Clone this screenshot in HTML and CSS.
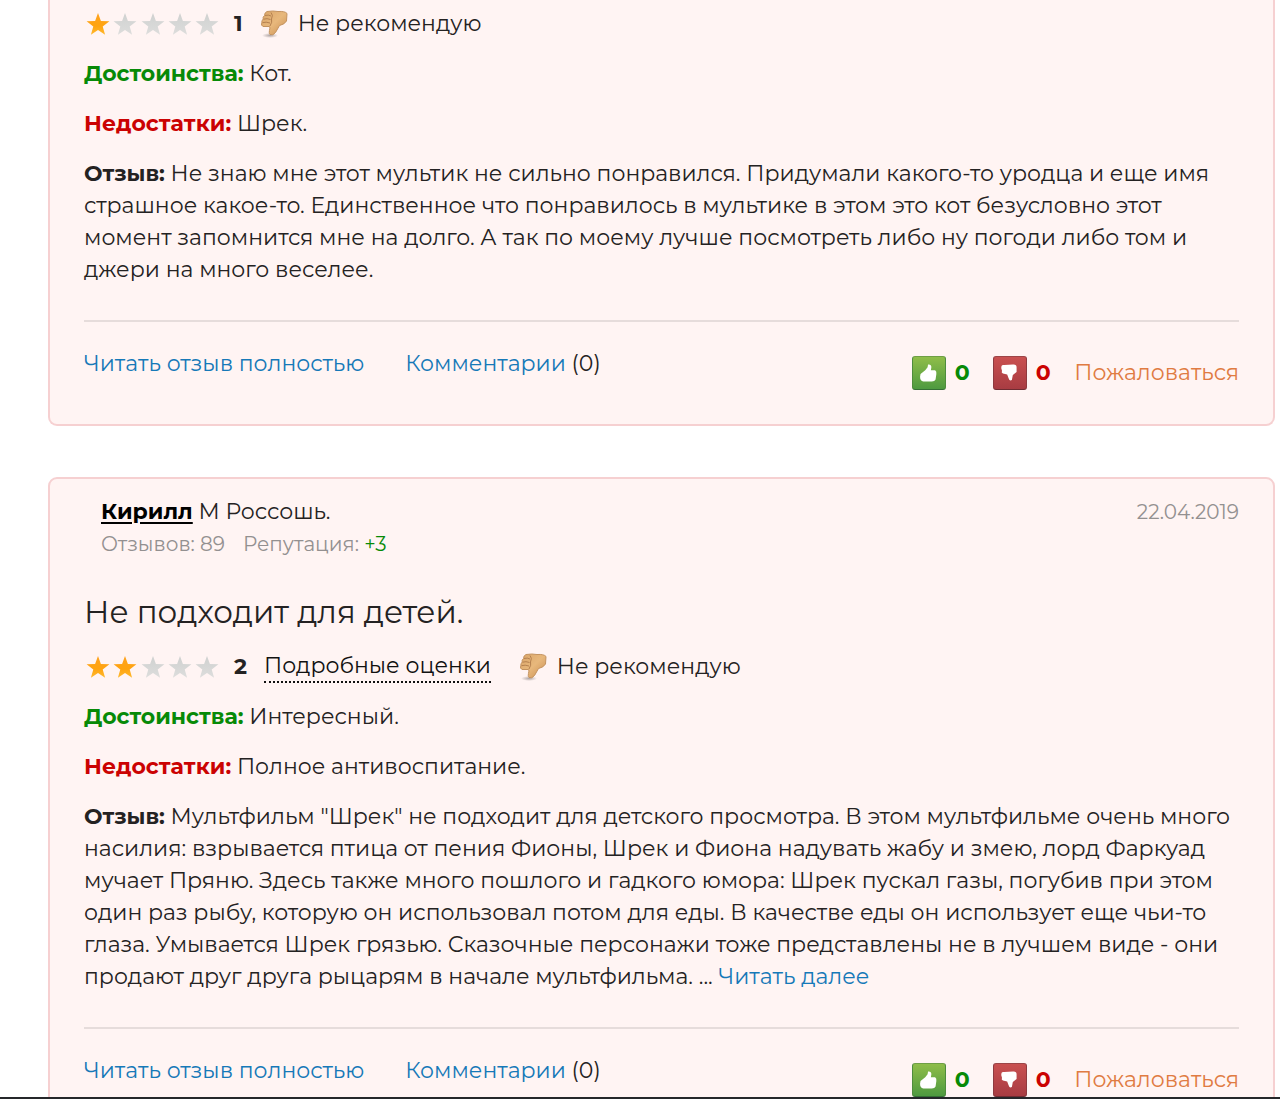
FILE: index.html
```html
<!DOCTYPE html>
<html lang="ru">
<head>
<meta charset="utf-8">
<meta name="viewport" content="width=device-width, initial-scale=1">
<title>Отзывы</title>
<link rel="stylesheet" href="styles.css">
</head>
<body>
<svg class="defs" width="0" height="0" aria-hidden="true">
  <defs>
    <linearGradient id="gold" x1="0" y1="0" x2="0" y2="1"><stop offset="0" stop-color="#ffa21f"/><stop offset=".6" stop-color="#ffa410"/><stop offset="1" stop-color="#ffb92e"/></linearGradient>
    <linearGradient id="silver" x1="0" y1="0" x2="0" y2="1"><stop offset="0" stop-color="#cfd1d0"/><stop offset="1" stop-color="#dddddc"/></linearGradient>
    <linearGradient id="skin" x1="0" y1="0" x2="1" y2="1"><stop offset="0" stop-color="#d9a468"/><stop offset=".5" stop-color="#e8b87c"/><stop offset="1" stop-color="#c98d50"/></linearGradient>
    <radialGradient id="shade"><stop offset="0" stop-color="#8f8583" stop-opacity=".7"/><stop offset="1" stop-color="#8f8583" stop-opacity="0"/></radialGradient>
    <path id="star" d="M12 1 L14.9 9 L23.4 9.3 L16.7 14.5 L19.1 22.7 L12 18 L4.9 22.7 L7.3 14.5 L.6 9.3 L9.1 9 Z"/>
    <g id="thumb">
      <ellipse cx="10" cy="25.500" rx="8" ry="2.500" fill="url(#shade)"/>
      <path d="M7 1.500 Q13 .5 18 1.500 Q25 1 27 3.500 L26.500 11 Q24.500 14.500 19.500 15.500 L15.500 22.500 Q13 26 10 24.500 Q8.500 23.500 10 18 L9.500 16.500 L3 16.500 Q.7 15.500 1.800 12.500 Q1.500 11 3.200 9 Q2.500 7 4.500 5.500 Q4.500 2.500 7 1.500 Z" fill="url(#skin)" stroke="#c4935f" stroke-width="1"/>
      <path d="M5 5.500 Q8.500 4.500 11 6 M3.500 9.200 Q7 8 10.500 9.500 M2.500 12.700 Q6 11.500 10 13 M11 2.500 Q13.500 5 11.500 9 Q12.500 12 10 16" fill="none" stroke="#b58150" stroke-width="1"/>
    </g>
    <path id="hand" d="M8 18 L13 14 L15.500 11 L16 8 Q19.500 7.500 19.500 11 L19 14 L23.500 14 Q25.300 15 24.800 18 L24 24 Q23 26 20 26 L11 26 Q7.500 25.500 7.500 21 Z"/>
    <path id="hand-down" d="M8 9.500 Q8.500 8 11 8.500 L20 8 Q24 7.500 24 11 L24 16 L20 19 L19 24.500 Q16.500 26 15.500 22.500 L14 18.500 L9.500 17.500 Q7.500 16.500 8.500 14.500 Q7 12 8 9.500 Z"/>
  </defs>
</svg>
<div class="shell">
  <main class="feed">
    <article class="card card-continued">
      <div class="rating">
        <svg class="stars" viewBox="0 0 136 26" role="img" aria-label="1 из 5"><use href="#star" x="2" y="1" fill="url(#gold)"/><g fill="url(#silver)"><use href="#star" x="29" y="1"/><use href="#star" x="57" y="1"/><use href="#star" x="84" y="1"/><use href="#star" x="111" y="1"/></g></svg>
        <b class="score">1</b>
        <svg class="thumb" viewBox="0 0 28 28" aria-hidden="true"><use href="#thumb"/></svg>
        <span>Не рекомендую</span>
      </div>
      <p><b class="plus">Достоинства:</b> Кот.</p>
      <p><b class="minus">Недостатки:</b> Шрек.</p>
      <p><b>Отзыв:</b> Не знаю мне этот мультик не сильно понравился. Придумали какого-то уродца и еще имя<br>страшное какое-то. Единственное что понравилось в мультике в этом это кот безусловно этот<br>момент запомнится мне на долго. А так по моему лучше посмотреть либо ну погоди либо том и<br>джери на много веселее.</p>
      <footer class="actions">
        <div class="links"><a href="#full1">Читать отзыв полностью</a><span><a href="#comments1">Комментарии</a> (0)</span></div>
        <div class="votes">
          <button class="vote up" type="button" aria-label="Полезно"><svg viewBox="0 0 34 34"><use href="#hand"/></svg></button><b class="count plus">0</b>
          <button class="vote down" type="button" aria-label="Бесполезно"><svg viewBox="0 0 34 34"><use href="#hand-down"/></svg></button><b class="count minus">0</b>
          <a class="report" href="#report1">Пожаловаться</a>
        </div>
      </footer>
    </article>

    <article class="card">
      <header class="author">
        <div class="who"><div><a class="name" href="#user">Кирилл</a> М Россошь.</div>
        <div class="stats"><span>Отзывов: 89</span><span>Репутация: <span class="plus">+3</span></span></div></div>
        <time class="date" datetime="2019-04-22">22.04.2019</time>
      </header>
      <h2 class="title">Не подходит для детей.</h2>
      <div class="rating">
        <svg class="stars" viewBox="0 0 136 26" role="img" aria-label="2 из 5"><g fill="url(#gold)"><use href="#star" x="2" y="1"/><use href="#star" x="29" y="1"/></g><g fill="url(#silver)"><use href="#star" x="57" y="1"/><use href="#star" x="84" y="1"/><use href="#star" x="111" y="1"/></g></svg>
        <b class="score">2</b>
        <a class="details" href="#details">Подробные оценки</a>
        <svg class="thumb" viewBox="0 0 28 28" aria-hidden="true"><use href="#thumb"/></svg>
        <span>Не рекомендую</span>
      </div>
      <p><b class="plus">Достоинства:</b> Интересный.</p>
      <p><b class="minus">Недостатки:</b> Полное антивоспитание.</p>
      <p><b>Отзыв:</b> Мультфильм "Шрек" не подходит для детского просмотра. В этом мультфильме очень много<br>насилия: взрывается птица от пения Фионы, Шрек и Фиона надувать жабу и змею, лорд Фаркуад<br>мучает Пряню. Здесь также много пошлого и гадкого юмора: Шрек пускал газы, погубив при этом<br>один раз рыбу, которую он использовал потом для еды. В качестве еды он использует еще чьи-то<br>глаза. Умывается Шрек грязью. Сказочные персонажи тоже представлены не в лучшем виде - они<br>продают друг друга рыцарям в начале мультфильма. ... <a href="#more">Читать далее</a></p>
      <footer class="actions">
        <div class="links"><a href="#full2">Читать отзыв полностью</a><span><a href="#comments2">Комментарии</a> (0)</span></div>
        <div class="votes">
          <button class="vote up" type="button" aria-label="Полезно"><svg viewBox="0 0 34 34"><use href="#hand"/></svg></button><b class="count plus">0</b>
          <button class="vote down" type="button" aria-label="Бесполезно"><svg viewBox="0 0 34 34"><use href="#hand-down"/></svg></button><b class="count minus">0</b>
          <a class="report" href="#report2">Пожаловаться</a>
        </div>
      </footer>
    </article>
  </main>
  <div class="edge"></div>
</div>
</body>
</html>
```
FILE: styles.css
```css
* { box-sizing: border-box; }
body {
  margin: 0;
  background: #fff;
  color: #242222;
  font: 22px/32px Montserrat, Inter, "Noto Sans", sans-serif;
}
.defs { position: absolute; }
.shell { display: flex; flex-direction: column; height: 100vh; }
.feed {
  flex: 1;
  min-height: 0;
  overflow-y: auto;
  scrollbar-width: none;
  padding: 0 5px 0 48px;
}
.edge { flex: none; height: 2px; background: #25272a; }
a { color: #1679b8; text-decoration: none; }
p { margin: 18px 0 0; }
b { font-weight: 700; }
.plus { color: #078a07; }
.minus { color: #cb0202; }

.card {
  margin-bottom: 51px;
  padding: 17px 34px 34px;
  border: 2px solid #f6d0d1;
  border-radius: 9px;
  background: #fff4f3;
}
.card-continued {
  padding-top: 8px;
  border-top: 0;
  border-radius: 0 0 9px 9px;
}

.author { display: flex; justify-content: space-between; padding-left: 17px; }
.name { color: #000; font-weight: 700; text-decoration: underline; text-decoration-thickness: 2px; text-underline-offset: 3px; }
.stats { display: flex; gap: 18px; color: #939090; font-size: 20px; }
.date { color: #939090; font-size: 20px; }
.title { margin: 32px 0 18px; font-size: 31px; line-height: 41px; font-weight: 400; }

.rating { display: flex; align-items: center; height: 32px; }
.stars { width: 136px; height: 26px; margin-right: 14px; }
.score { margin-right: 17px; }
.thumb { width: 28px; height: 28px; margin-right: 10px; }
.details { margin-right: 28px; color: #111; line-height: 30px; border-bottom: 2px dotted #111; }

.actions {
  display: flex;
  justify-content: space-between;
  margin-top: 34px;
  padding-top: 26px;
  border-top: 2px solid #e6dcdb;
}
.links { display: flex; gap: 41px; }
.votes { display: flex; align-items: center; padding-top: 8px; }
.vote {
  width: 34px;
  height: 34px;
  padding: 0;
  border: 1px solid;
  border-radius: 3px;
  fill: #fff;
}
.vote svg { display: block; width: 32px; height: 32px; }
.up { background: linear-gradient(#8fbd49, #4e9a40); border-color: #6f9f45 #4e8c3d #356f35; }
.down { background: linear-gradient(#c95050, #a83c42); border-color: #9c4547 #8e3a3f #6f2c32; }
.count { width: 16px; margin: 0 23px 0 8px; text-align: center; }
.report { color: #e07b42; }
```
